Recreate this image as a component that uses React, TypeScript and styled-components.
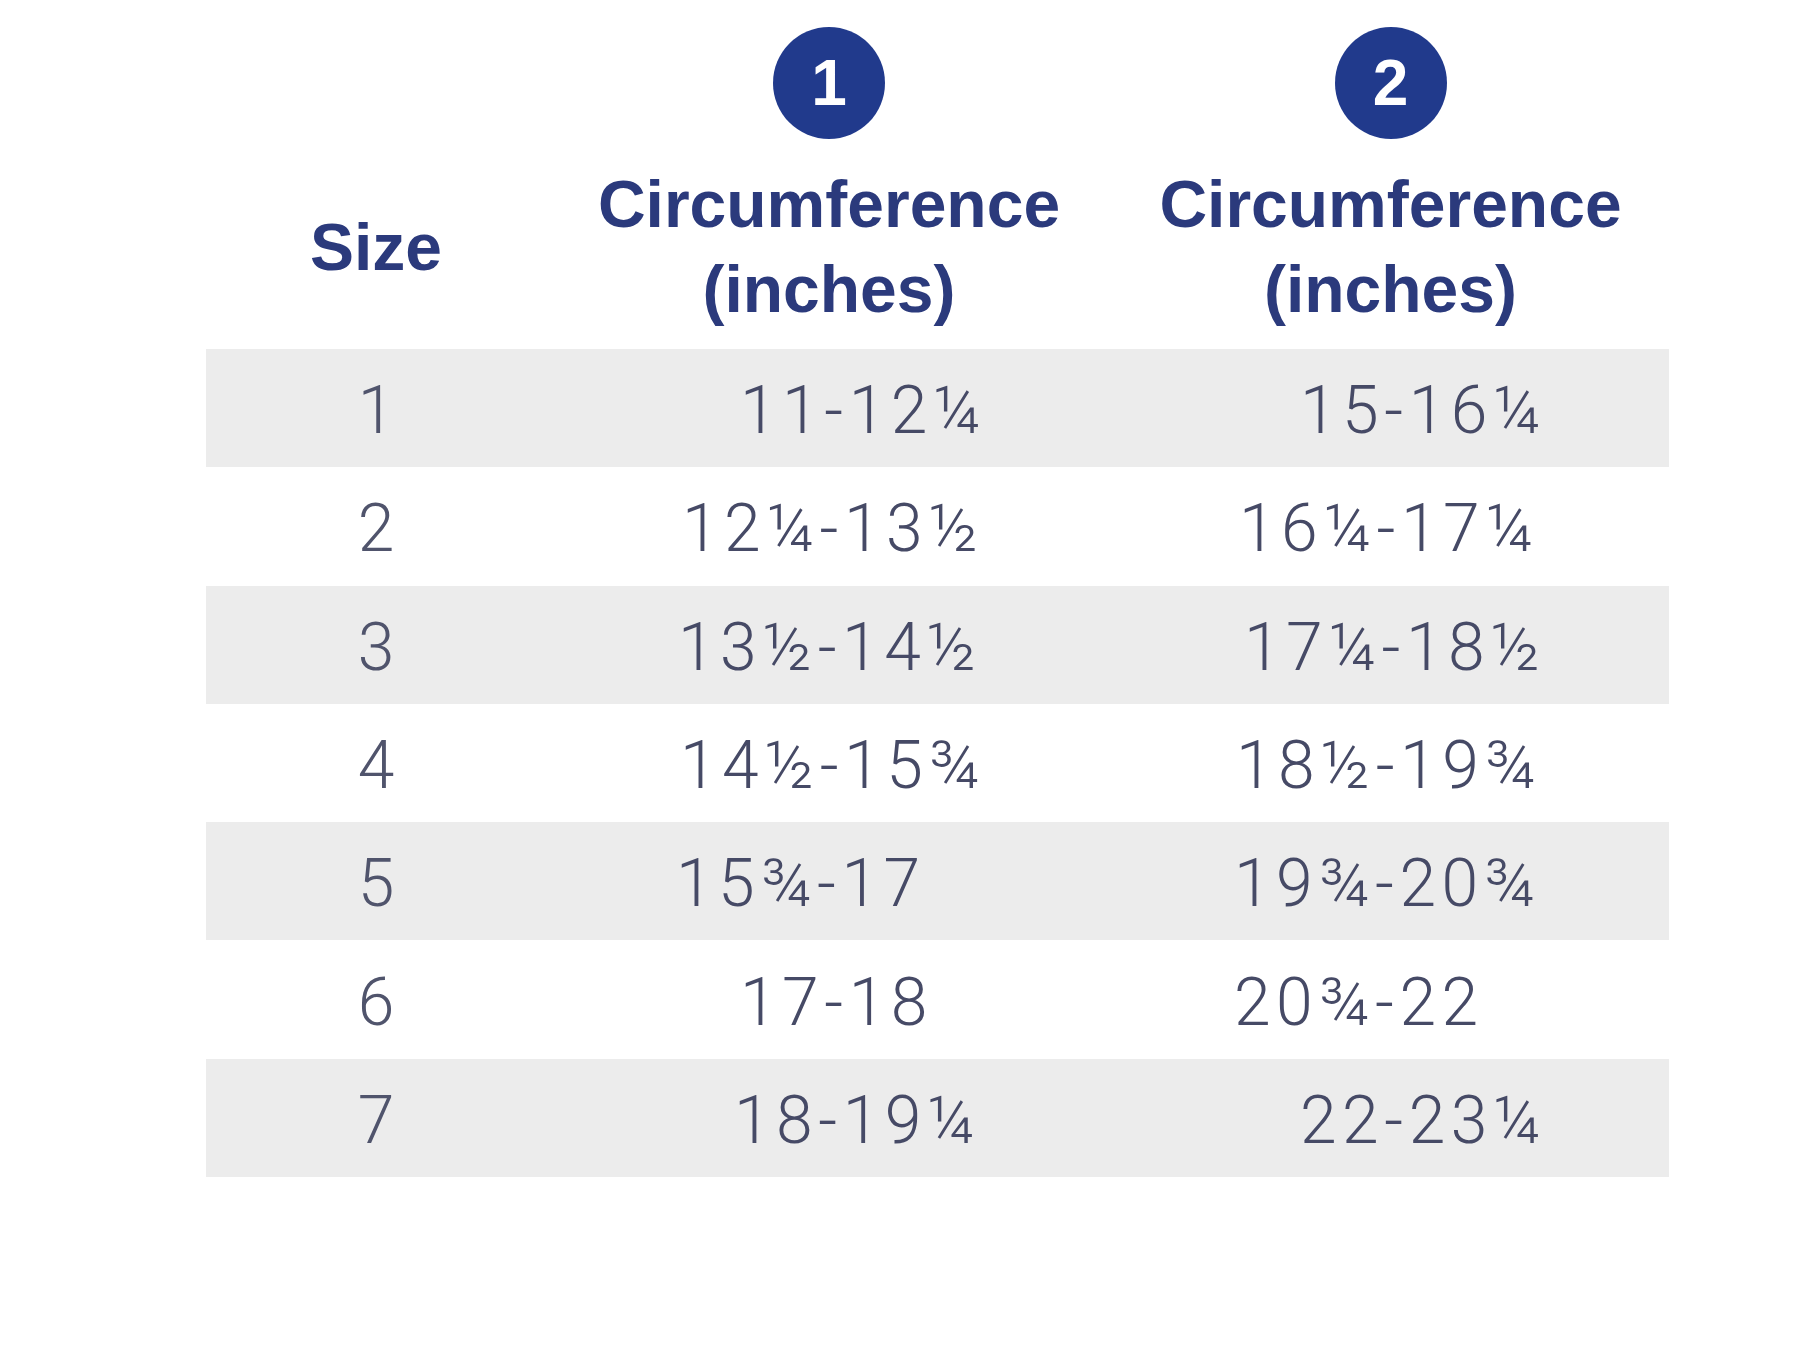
import React from "react";
import styled, { createGlobalStyle } from "styled-components";

const Global = createGlobalStyle`
  html, body { margin: 0; padding: 0; background: #ffffff; }
  body { font-family: "Liberation Sans", Arial, sans-serif; }
`;

const Page = styled.div`
  width: 1812px;
  height: 1348px;
  background: #ffffff;
  padding-left: 206px;
  box-sizing: border-box;
`;

const Table = styled.div`
  width: 1463px;
  display: flex;
  flex-direction: column;
`;

const HeaderRow = styled.div`
  display: grid;
  grid-template-columns: 340px 566px 557px;
  height: 349px;
  box-sizing: border-box;
  padding-bottom: 17px;
`;

const SizeHead = styled.div`
  display: flex;
  align-items: flex-end;
  justify-content: center;
  font-family: "Liberation Sans", Arial, sans-serif;
  font-weight: 700;
  font-size: 66px;
  line-height: 170px;
  color: #2b3a7c;
`;

const ColHead = styled.div`
  display: flex;
  flex-direction: column;
  align-items: center;
  padding-top: 27px;
`;

const Badge = styled.div`
  width: 112px;
  height: 112px;
  border-radius: 50%;
  background: #213a8c;
  color: #ffffff;
  display: flex;
  align-items: center;
  justify-content: center;
  font-family: "Liberation Sans", Arial, sans-serif;
  font-weight: 700;
  font-size: 64px;
  line-height: 1;
  margin-bottom: 23px;
`;

const HeadText = styled.div`
  font-family: "Liberation Sans", Arial, sans-serif;
  font-weight: 700;
  font-size: 66px;
  line-height: 85px;
  color: #2b3a7c;
  text-align: center;
  white-space: nowrap;
`;

const Row = styled.div<{ $shaded: boolean }>`
  display: grid;
  grid-template-columns: 340px 566px 557px;
  height: 118.3px;
  background: ${(p) => (p.$shaded ? "#ececec" : "#ffffff")};
`;

const Cell = styled.div<{ $indent?: number; $center?: boolean }>`
  display: flex;
  align-items: center;
  justify-content: ${(p) => (p.$center ? "center" : "flex-start")};
  padding-left: ${(p) => (p.$indent ?? 0)}px;
  padding-top: 5px;
  box-sizing: border-box;
  font-family: Roboto, "Liberation Sans", sans-serif;
  font-weight: 300;
  font-size: 66px;
  letter-spacing: ${(p) => (p.$center ? "0" : "5.5px")};
  color: ${(p) => (p.$center ? "#50546c" : "#464a66")};
  white-space: nowrap;
`;

type RowData = {
  size: string;
  a: string;
  aIndent: number;
  b: string;
  bIndent: number;
};

const rows: RowData[] = [
  { size: "1", a: "11-12¼", aIndent: 194, b: "15-16¼", bIndent: 188 },
  { size: "2", a: "12¼-13½", aIndent: 136, b: "16¼-17¼", bIndent: 127 },
  { size: "3", a: "13½-14½", aIndent: 132, b: "17¼-18½", bIndent: 132 },
  { size: "4", a: "14½-15¾", aIndent: 134, b: "18½-19¾", bIndent: 124 },
  { size: "5", a: "15¾-17", aIndent: 130, b: "19¾-20¾", bIndent: 122 },
  { size: "6", a: "17-18", aIndent: 194, b: "20¾-22", bIndent: 122 },
  { size: "7", a: "18-19¼", aIndent: 188, b: "22-23¼", bIndent: 188 },
];

export default function App() {
  return (
    <>
      <Global />
      <Page>
        <Table>
          <HeaderRow>
            <SizeHead>Size</SizeHead>
            <ColHead>
              <Badge>1</Badge>
              <HeadText>
                Circumference
                <br />
                (inches)
              </HeadText>
            </ColHead>
            <ColHead>
              <Badge>2</Badge>
              <HeadText>
                Circumference
                <br />
                (inches)
              </HeadText>
            </ColHead>
          </HeaderRow>
          {rows.map((r, i) => (
            <Row key={r.size} $shaded={i % 2 === 0}>
              <Cell $center>{r.size}</Cell>
              <Cell $indent={r.aIndent}>{r.a}</Cell>
              <Cell $indent={r.bIndent}>{r.b}</Cell>
            </Row>
          ))}
        </Table>
      </Page>
    </>
  );
}
